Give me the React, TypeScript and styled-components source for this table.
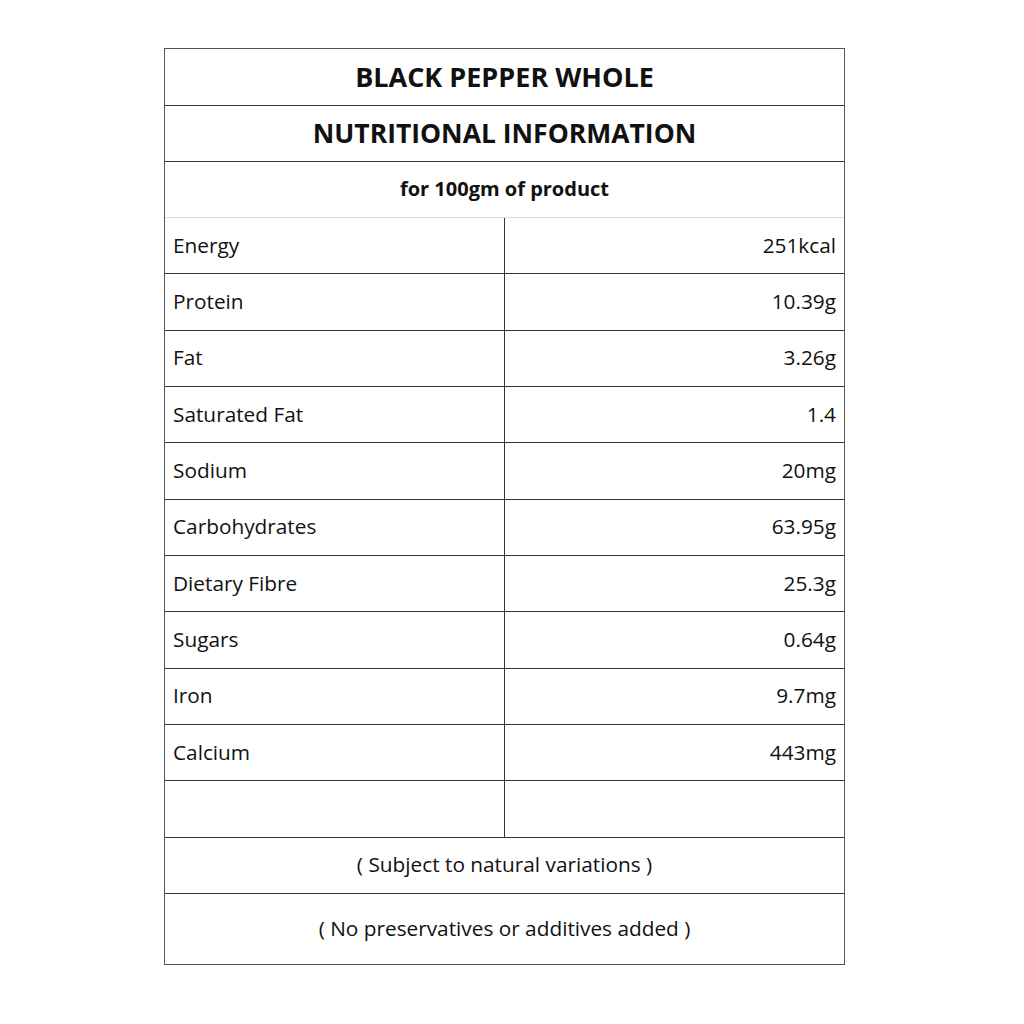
import styled, { createGlobalStyle } from 'styled-components';

const GlobalStyle = createGlobalStyle`
  html, body {
    margin: 0;
    background: #ffffff;
  }
  body {
    font-family: "Open Sans", "Noto Sans", sans-serif;
    color: #111;
  }
`;

const Page = styled.div`
  width: 1024px;
  height: 1024px;
  padding: 48px 0 0 164px;
  box-sizing: border-box;
`;

const Table = styled.div`
  width: 681px;
  box-sizing: border-box;
  border: 1px solid #555;
  display: flex;
  flex-direction: column;
`;

const FullRow = styled.div<{ h: number; bold?: boolean; size: number; line?: string }>`
  height: ${(p) => p.h}px;
  box-sizing: border-box;
  border-bottom: 1px solid ${(p) => p.line || '#333'};
  display: flex;
  align-items: center;
  justify-content: center;
  padding-bottom: 2px;
  font-size: ${(p) => p.size}px;
  font-weight: ${(p) => (p.bold ? 700 : 400)};
  &:last-child {
    border-bottom: none;
  }
`;

const SplitRow = styled.div`
  height: 56.33px;
  box-sizing: border-box;
  border-bottom: 1px solid #333;
  display: grid;
  grid-template-columns: 339px 1fr;
`;

const Cell = styled.div<{ right?: boolean }>`
  display: flex;
  align-items: center;
  justify-content: ${(p) => (p.right ? 'flex-end' : 'flex-start')};
  padding: 0 8px 2px;
  font-size: 20.8px;
  border-left: ${(p) => (p.right ? '1px solid #333' : 'none')};
`;

const rows: [string, string][] = [
  ['Energy', '251kcal'],
  ['Protein', '10.39g'],
  ['Fat', '3.26g'],
  ['Saturated Fat', '1.4'],
  ['Sodium', '20mg'],
  ['Carbohydrates', '63.95g'],
  ['Dietary Fibre', '25.3g'],
  ['Sugars', '0.64g'],
  ['Iron', '9.7mg'],
  ['Calcium', '443mg'],
  ['', ''],
];

export default function App() {
  return (
    <>
      <GlobalStyle />
      <Page>
        <Table>
          <FullRow h={57} bold size={27}>BLACK PEPPER WHOLE</FullRow>
          <FullRow h={56} bold size={26.5}>NUTRITIONAL INFORMATION</FullRow>
          <FullRow h={56} bold size={20} line="#ddd">for 100gm of product</FullRow>
          {rows.map(([name, value], i) => (
            <SplitRow key={i}>
              <Cell>{name}</Cell>
              <Cell right>{value}</Cell>
            </SplitRow>
          ))}
          <FullRow h={56} size={20.8}>( Subject to natural variations )</FullRow>
          <FullRow h={70} size={20.8}>( No preservatives or additives added )</FullRow>
        </Table>
      </Page>
    </>
  );
}
